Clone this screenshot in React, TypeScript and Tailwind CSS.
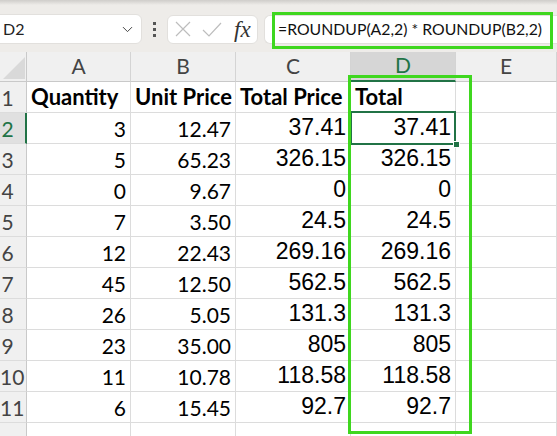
import { ChevronDown } from 'lucide-react'

const ROWS: [string, string, string, string][] = [
  ['3', '12.47', '37.41', '37.41'],
  ['5', '65.23', '326.15', '326.15'],
  ['0', '9.67', '0', '0'],
  ['7', '3.50', '24.5', '24.5'],
  ['12', '22.43', '269.16', '269.16'],
  ['45', '12.50', '562.5', '562.5'],
  ['26', '5.05', '131.3', '131.3'],
  ['23', '35.00', '805', '805'],
  ['11', '10.78', '118.58', '118.58'],
  ['6', '15.45', '92.7', '92.7'],
]

const COLS = 'grid-cols-[27px_104px_105px_115px_105px_1fr]'
const LATO = "font-['Lato','Liberation_Sans',sans-serif]"
const ARIAL = "font-['Liberation_Sans','Arial',sans-serif]"

function RowHead({ n, active = false }: { n?: number; active?: boolean }) {
  return (
    <div
      className={`relative flex items-center border-b border-r border-b-[#dcdcdc] ${
        active ? 'bg-[#e0e0e0] border-r-2 border-r-[#217346] text-[#217346]' : 'bg-[#f0f0f0] border-r-[#c9c9c9] text-[#444]'
      }`}
    >
      <span className={`w-[15px] text-center text-[21px] leading-none ${LATO}`}>{n}</span>
    </div>
  )
}

function Cell({
  children,
  right = false,
  arial = false,
  bold = false,
}: {
  children?: React.ReactNode
  right?: boolean
  arial?: boolean
  bold?: boolean
}) {
  return (
    <div
      className={`flex items-end overflow-visible whitespace-nowrap border-b border-r border-[#dcdcdc] bg-white text-black ${
        right ? 'justify-end pr-[4px]' : 'pl-[4px]'
      } ${arial ? `${ARIAL} text-[23px] pb-[4px]` : bold ? `${LATO} text-[22px] pb-[4px]` : `${LATO} text-[21px] pb-[4px]`} ${
        bold ? 'font-bold' : ''
      }`}
    >
      <span className="leading-none">{children}</span>
    </div>
  )
}

function Toolbar() {
  return (
    <div className="relative h-[52px] bg-[#eeece9]">
      <div className="absolute inset-x-0 top-0 h-[5px] bg-gradient-to-b from-[#cfcdca] to-[#eeece9]" />
      <div className="relative flex items-center pt-[14px]">
        {/* name box */}
        <div className="flex h-[30px] w-[148px] -ml-[6px] items-center justify-between rounded-md border border-[#e2e0dd] bg-white pl-[8px] pr-[5px]">
          <span className={`text-[16px] text-[#222] ${LATO}`}>D2</span>
          <ChevronDown size={17} strokeWidth={1.4} className="text-[#444]" />
        </div>
        {/* dots */}
        <div className="ml-[11px] flex flex-col gap-[3px]">
          <span className="h-[3px] w-[3px] bg-[#555]" />
          <span className="h-[3px] w-[3px] bg-[#555]" />
          <span className="h-[3px] w-[3px] bg-[#555]" />
        </div>
        {/* fx box */}
        <div className="ml-[11px] flex h-[29px] w-[91px] items-center rounded-md border border-[#e2e0dd] bg-white pl-[7px]">
          <svg width="16" height="16" viewBox="0 0 16 16" fill="none" stroke="#bdbdbd" strokeWidth="1.2">
            <path d="M1 1 L15 15 M15 1 L1 15" />
          </svg>
          <svg className="ml-[11px]" width="20" height="15" viewBox="0 0 20 15" fill="none" stroke="#bdbdbd" strokeWidth="1.2">
            <path d="M1 8 L7 14 L19 1" />
          </svg>
          <span className="ml-[12px] font-['Liberation_Serif',serif] text-[23px] italic leading-none text-[#333]">fx</span>
        </div>
        {/* formula */}
        <div className="ml-[6px] flex h-[29px] flex-1 items-center rounded-l-md border border-r-0 border-[#e2e0dd] bg-white pl-[13px]">
          <span className={`whitespace-nowrap text-[15.8px] text-[#111] ${LATO}`}>=ROUNDUP(A2,2) * ROUNDUP(B2,2)</span>
        </div>
      </div>
    </div>
  )
}

export default function App() {
  const letters = ['A', 'B', 'C', 'D', 'E']
  return (
    <div className="relative h-[436px] w-[557px] overflow-hidden bg-white">
      <Toolbar />

      {/* column headers */}
      <div className={`grid ${COLS} h-[30px]`}>
        <div className="relative border-b border-r border-[#c9c9c9] bg-[#f0f0f0]">
          <svg className="absolute left-[3px] top-[5px]" width="22" height="22" viewBox="0 0 22 22">
            <path d="M22 0 L22 22 L0 22 Z" fill="#d9d9d9" />
          </svg>
        </div>
        {letters.map((l) => (
          <div
            key={l}
            className={`flex items-end justify-center pb-[5px] border-r border-[#d4d4d4] text-[21px] leading-none ${LATO} ${
              l === 'D'
                ? 'bg-[#d6d6d6] border-b-2 border-b-[#217346] text-[#217346]'
                : 'bg-[#f0f0f0] border-b border-b-[#c9c9c9] text-[#444]'
            }`}
          >
            {l}
          </div>
        ))}
      </div>

      {/* header row */}
      <div className={`grid ${COLS} h-[31px]`}>
        <RowHead n={1} />
        <Cell bold>Quantity</Cell>
        <Cell bold>Unit Price</Cell>
        <Cell bold>Total Price</Cell>
        <Cell bold>Total</Cell>
        <Cell />
      </div>

      {ROWS.map((r, i) => (
        <div key={i} className={`grid ${COLS} h-[31px]`}>
          <RowHead n={i + 2} active={i === 0} />
          <Cell right>{r[0]}</Cell>
          <Cell right>{r[1]}</Cell>
          <Cell right arial>{r[2]}</Cell>
          <Cell right arial>{r[3]}</Cell>
          <Cell />
        </div>
      ))}

      <div className={`grid ${COLS} h-[31px]`}>
        <RowHead />
        <Cell />
        <Cell />
        <Cell />
        <Cell />
        <Cell />
      </div>

      {/* selected cell D2 */}
      <div className="absolute left-[350px] top-[111px] h-[34px] w-[106px] border-2 border-[#217346]" />
      <div className="absolute left-[453px] top-[141px] h-[7px] w-[7px] border border-white bg-[#217346]" />

      {/* highlight boxes */}
      <div className="absolute left-[272px] top-[12px] h-[37px] w-[281px] border-[3px] border-[#3fd71f]" />
      <div className="absolute left-[348px] top-[75px] h-[359px] w-[124px] border-[3px] border-[#3fd71f]" />
    </div>
  )
}
